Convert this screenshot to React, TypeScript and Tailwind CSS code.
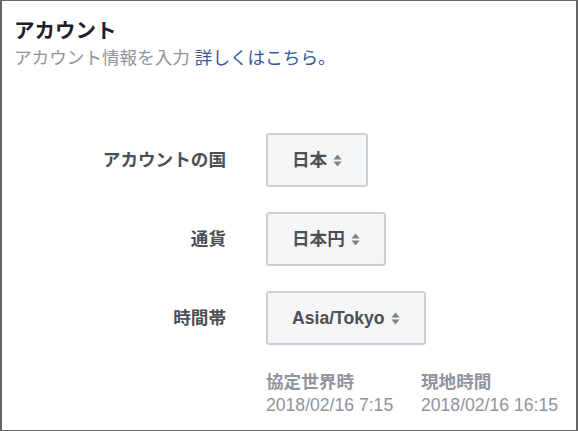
import React from "react";

const font = { fontFamily: '"Liberation Sans", "Noto Sans CJK JP", sans-serif' };

const Caret: React.FC = () => (
  <svg width="9" height="13" viewBox="0 0 9 13" className="ml-[6px] shrink-0">
    <path d="M4.5 0.5 L8.5 5.5 H0.5 Z" fill="#7d8188" />
    <path d="M4.5 12.5 L8.5 7.5 H0.5 Z" fill="#7d8188" />
  </svg>
);

const Select: React.FC<{ value: string }> = ({ value }) => (
  <button className="flex items-center h-[54px] px-[24px] rounded-[3px] border-2 border-[#ccd0d5] bg-[#f5f6f7] text-[#4b4f56] font-bold text-[17.6px]">
    {value}
    <Caret />
  </button>
);

const Row: React.FC<{ label: string; value: string }> = ({ label, value }) => (
  <div className="flex items-center">
    <div className="w-[224px] text-right font-bold text-[17.6px] text-[#4b4f56]">{label}</div>
    <div className="ml-[40px]">
      <Select value={value} />
    </div>
  </div>
);

export default function App() {
  return (
    <div style={font} className="w-[578px] h-[431px] bg-white border-[#666] border-t border-b border-l-2 border-r-2 overflow-hidden">
      <div className="pl-[12px] pt-[17px]">
        <h2 className="text-[20.5px] font-bold leading-[26px] text-[#1d2129]">アカウント</h2>
        <p className="mt-[2px] text-[17.6px] leading-[24px] text-[#90949c]">
          アカウント情報を入力 <span className="text-[#365899]">詳しくはこちら。</span>
        </p>
      </div>
      <div className="mt-[63px] flex flex-col gap-[25px]">
        <Row label="アカウントの国" value="日本" />
        <Row label="通貨" value="日本円" />
        <Row label="時間帯" value="Asia/Tokyo" />
      </div>
      <div className="ml-[264px] mt-[26px] flex text-[17.6px] leading-[23px] text-[#90949c]">
        <div className="w-[155px]">
          <div className="font-bold">協定世界時</div>
          <div>2018/02/16 7:15</div>
        </div>
        <div>
          <div className="font-bold">現地時間</div>
          <div>2018/02/16 16:15</div>
        </div>
      </div>
    </div>
  );
}
